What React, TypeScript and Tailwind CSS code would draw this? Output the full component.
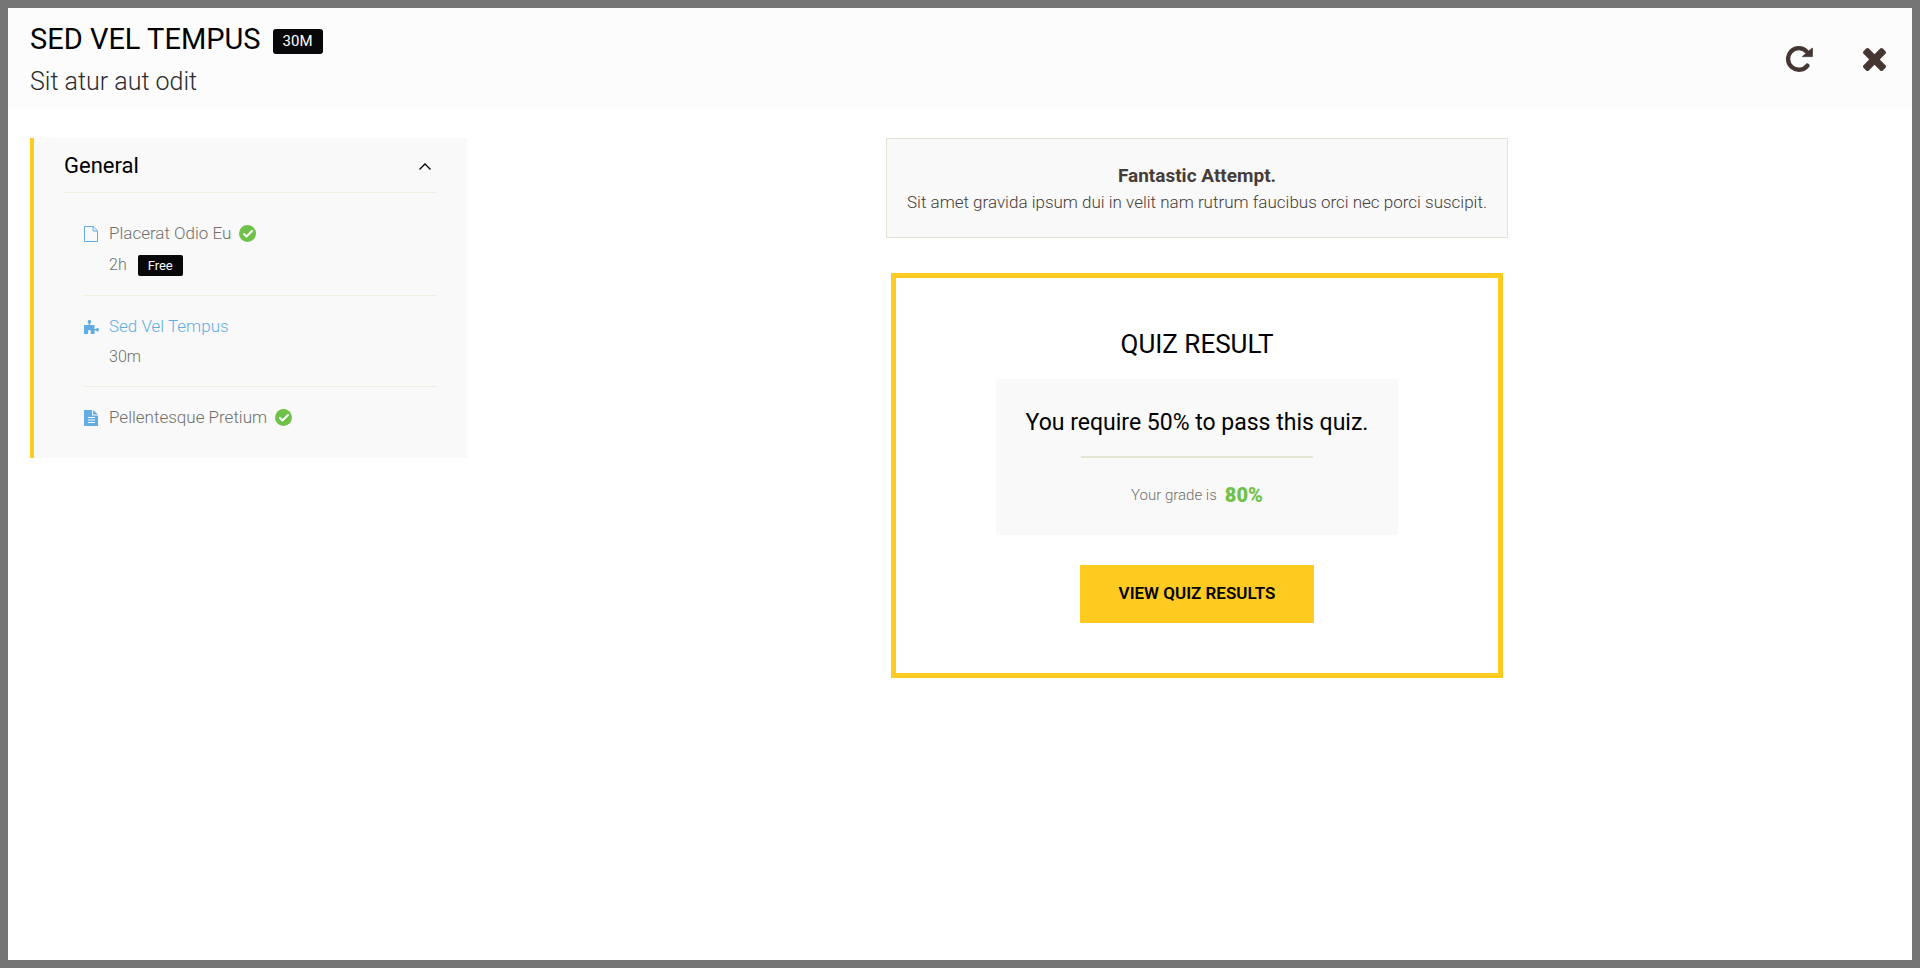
import { FiCheck } from "react-icons/fi";
import type { ReactNode } from "react";

function RepeatIcon() {
  return (
    <svg viewBox="0 0 27 26" className="h-[26px] w-[27px]" aria-hidden="true">
      <path d="M21.400 19.600A10.800 10.800 0 1 1 20.600 5.400" fill="none" stroke="currentColor" strokeWidth="4.300" strokeLinecap="round" />
      <path d="M26.400 2v8.600H16.400z" fill="currentColor" stroke="currentColor" strokeWidth=".8" strokeLinejoin="round" />
    </svg>
  );
}

function CloseIcon() {
  return (
    <svg viewBox="110 78 1188 1188" className="size-[23px]" aria-hidden="true">
      <path
        fill="currentColor"
        d="M1298 1034q0 40-28 68l-136 136q-28 28-68 28t-68-28L704 944l-294 294q-28 28-68 28t-68-28l-136-136q-28-28-28-68t28-68l294-294-294-294q-28-28-28-68t28-68l136-136q28-28 68-28t68 28l294 294 294-294q28-28 68-28t68 28l136 136q28 28 28 68t-28 68L976 672l294 294q28 28 28 68z"
      />
    </svg>
  );
}

function FileIcon() {
  return (
    <svg viewBox="0 0 14 16" className="h-4 w-3.5" fill="none" stroke="currentColor" aria-hidden="true">
      <path d="M.5.5h8.700l4.300 4.300v10.700H.5zM9 .5V5h4.500" />
    </svg>
  );
}

function PuzzleIcon() {
  return (
    <svg viewBox="0 0 15 14" className="h-3.5 w-[15px]" fill="currentColor" aria-hidden="true">
      <path d="M0 5h4.600V3.200C3.800 2.800 3.600 2.200 3.600 1.700 3.600.7 4.400 0 5.400 0s1.800.7 1.800 1.700c0 .5-.2 1.100-1 1.500V5h4.300v4h1.600c.3-.7.8-1 1.300-1 .9 0 1.600.8 1.600 1.800s-.7 1.800-1.600 1.800c-.5 0-1-.3-1.300-1h-1.600V14H6.800v-2.500c0-.8-.4-1.500-1.300-1.500s-1.400.7-1.400 1.500V14H0z" />
    </svg>
  );
}

function FileTextIcon() {
  return (
    <svg viewBox="0 0 14 16" className="h-4 w-3.5" aria-hidden="true">
      <path d="M0 0h8v5.500h6V16H0zM9 0l5 4.600H9z" fill="currentColor" />
      <path d="M4 7.500h7M4 10h7M4 12.500h7" stroke="#f9f9f9" />
    </svg>
  );
}

function DoneMark() {
  return (
    <span className="flex size-[17px] items-center justify-center rounded-full bg-[#70c14a] text-white">
      <FiCheck size={12} strokeWidth={4} aria-label="Completed" />
    </span>
  );
}

type Lesson = { title: string; icon: ReactNode; duration?: string; free?: boolean; done?: boolean; current?: boolean };

const lessons: Lesson[] = [
  { title: "Placerat Odio Eu", icon: <FileIcon />, duration: "2h", free: true, done: true },
  { title: "Sed Vel Tempus", icon: <PuzzleIcon />, duration: "30m", current: true },
  { title: "Pellentesque Pretium", icon: <FileTextIcon />, done: true },
];

function LessonItem({ lesson }: { lesson: Lesson }) {
  return (
    <li className="border-b border-dotted border-[#e3e4d3] pt-[15px] pb-3.5 last:border-0">
      <a href="#" className="flex h-[31px] items-center text-[17px]">
        <span className="w-[25px] text-[#61ade2]">{lesson.icon}</span>
        <span className={lesson.current ? "mr-2 text-[#61ade2]" : "mr-2 text-[#6f6f6a]"}>{lesson.title}</span>
        {lesson.done && <DoneMark />}
      </a>
      {lesson.duration && (
        <div className={lesson.free ? "flex h-8 items-center gap-[11px] pl-[25px]" : "flex h-[30px] items-center pl-[25px]"}>
          <span>{lesson.duration}</span>
          {lesson.free && (
            <span className="rounded-xs bg-[#08080b] px-2.5 text-[13px] leading-[21px] font-normal text-white">Free</span>
          )}
        </div>
      )}
    </li>
  );
}

export default function App() {
  return (
    <div className="flex min-h-screen flex-col border-8 border-[#757575] bg-white font-[Roboto,sans-serif] text-base font-light text-[#6f6f6a]">
      <header className="flex items-center justify-between bg-[#fcfcfc] pt-3 pr-[26px] pb-[10px] pl-[22px]">
        <div>
          <div className="flex items-center gap-3">
            <h1 className="text-[29px] leading-[38px] font-normal text-black">SED VEL TEMPUS</h1>
            <span className="mt-1 rounded-[3px] bg-[#08080b] px-2.5 text-[15px] leading-[25px] font-normal text-white">30M</span>
          </div>
          <p className="pt-[7px] text-[25px] leading-[33px] text-[#2b2b2b]">Sit atur aut odit</p>
        </div>
        <div className="flex items-center gap-[50px] text-[#463632]">
          <button type="button" aria-label="Restart">
            <RepeatIcon />
          </button>
          <button type="button" aria-label="Close">
            <CloseIcon />
          </button>
        </div>
      </header>

      <div className="flex items-start pt-[30px] pl-[22px]">
        <aside className="w-[437px] shrink-0 border-l-4 border-[#ffcb20] bg-[#f9f9f9] pr-[30px] pb-[11px] pl-[30px]">
          <button
            type="button"
            className="flex h-[55px] w-full items-center justify-between border-b border-dotted border-[#e3e4d3] pr-1.5 text-[22px] font-normal text-black"
          >
            <span>General</span>
            <svg viewBox="0 0 12 7" className="mt-0.5 h-[7px] w-3" fill="none" stroke="currentColor" strokeWidth="1.300" aria-hidden="true">
              <path d="M.5 6.500 6 1l5.500 5.500" />
            </svg>
          </button>
          <ul className="pt-[10px] pl-5">
            {lessons.map((lesson) => (
              <LessonItem key={lesson.title} lesson={lesson} />
            ))}
          </ul>
        </aside>

        <main className="flex grow flex-col items-center gap-[35px] pl-[15px]">
          <section className="w-[622px] border border-[#e3e4d3] bg-[#f9f9f9] pt-[23px] pb-[21px] text-center text-[#463c38]">
            <h2 className="text-[19px] leading-[27px] font-bold">Fantastic Attempt.</h2>
            <p className="text-[17px] leading-[27px]">
              Sit amet gravida ipsum dui in velit nam rutrum faucibus orci nec porci suscipit.
            </p>
          </section>

          <section className="flex w-[612px] flex-col items-center border-5 border-[#ffcb20] pt-[47px] pb-[50px]">
            <h2 className="text-[26px] leading-[38px] font-normal text-black">QUIZ RESULT</h2>
            <div className="mt-4 flex w-[402px] flex-col items-center bg-[#f9f9f9] pt-7 pb-[26px]">
              <p className="text-[23px] leading-8 font-normal text-black">You require 50% to pass this quiz.</p>
              <hr className="mt-[17px] w-[232px] border-t-2 border-[#e3e4d3]" />
              <p className="flex items-center gap-2 pt-[23px] text-[15px] leading-7">
                Your grade is <strong className="text-xl leading-7 font-black text-[#70c14a]">80%</strong>
              </p>
            </div>
            <button type="button" className="mt-[30px] h-[58px] w-[234px] bg-[#ffcb20] text-[17px] font-semibold text-black">
              VIEW QUIZ RESULTS
            </button>
          </section>
        </main>
      </div>
    </div>
  );
}
